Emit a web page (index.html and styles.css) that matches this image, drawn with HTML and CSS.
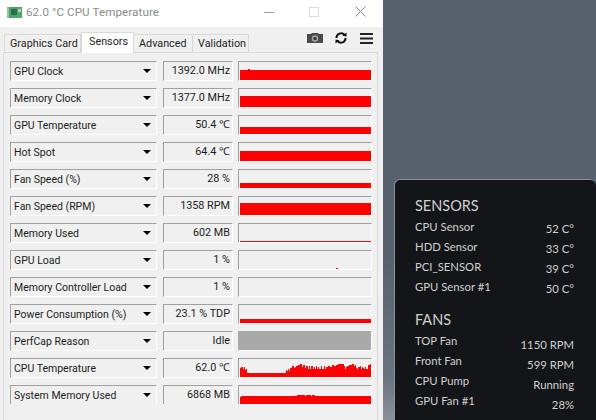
FILE: index.html
```html
<!DOCTYPE html>
<html>
<head>
    <title>CPU Temperature</title>
    <link rel="stylesheet" href="styles.css">
</head>
<body>

<div class="window">
    <div class="titlebar">
        <svg class="app-icon" width="16" height="16" viewBox="0 0 16 16">
            <rect x="1" y="3" width="14" height="11" fill="#4fa56b"/>
            <rect x="0" y="3" width="2" height="11" fill="#8fc79c"/>
            <rect x="4" y="5" width="6" height="6" fill="#2c6e46"/>
            <rect x="11" y="5" width="3" height="3" fill="#a9d6b4"/>
        </svg>
        <span class="title">62.0 °C CPU Temperature</span>
        <svg class="win-btn btn-min" width="10" height="10" viewBox="0 0 10 10"><path d="M0 5.5H10" stroke="#a0a0a0"/></svg>
        <svg class="win-btn btn-max" width="10" height="10" viewBox="0 0 10 10"><rect x="0.5" y="0.5" width="9" height="9" fill="none" stroke="#dcdcdc"/></svg>
        <svg class="win-btn btn-close" width="11" height="11" viewBox="0 0 11 11"><path d="M0.5 0.5L10.500 10.500M10.500 0.5L0.5 10.500" stroke="#8a8a8a"/></svg>
    </div>

    <div class="toolbar">
        <div class="tabs">
            <div class="tab tab-card">Graphics Card</div>
            <div class="tab active">Sensors</div>
            <div class="tab tab-adv">Advanced</div>
            <div class="tab tab-val">Validation</div>
        </div>
        <div class="tools">
            <svg width="16" height="10" viewBox="0 0 16 10">
                <path d="M0 1H4L5 0H11L12 1H16V10H0Z" fill="#4a4a4a"/>
                <circle cx="8" cy="5.500" r="3.200" fill="#a8a8a8"/>
                <circle cx="8" cy="5.500" r="1.800" fill="#3c3c3c"/>
            </svg>
            <svg width="12" height="12" viewBox="0 0 12 12">
                <path d="M1.500 6A4.500 4.500 0 0 1 9.500 3M10.500 6A4.500 4.500 0 0 1 2.500 9" fill="none" stroke="#111" stroke-width="2"/>
                <path d="M7.500 3.800L11.500 4.500V0.500Z M4.500 8.200L0.500 7.500V11.500Z" fill="#111"/>
            </svg>
            <svg width="13" height="11" viewBox="0 0 13 11">
                <path d="M0 1H13M0 5.500H13M0 10H13" stroke="#222" stroke-width="2"/>
            </svg>
        </div>
    </div>

    <div class="panel">
        <div class="row">
            <div class="combo"><span>GPU Clock</span><i class="arrow"></i></div>
            <div class="value">1392.0 MHz</div>
            <div class="graph"><i class="blip top"></i><i class="fill" style="height: 10px"></i></div>
        </div>
        <div class="row">
            <div class="combo"><span>Memory Clock</span><i class="arrow"></i></div>
            <div class="value">1377.0 MHz</div>
            <div class="graph"><i class="fill" style="height: 11px"></i></div>
        </div>
        <div class="row">
            <div class="combo"><span>GPU Temperature</span><i class="arrow"></i></div>
            <div class="value">50.4 ℃</div>
            <div class="graph"><i class="fill" style="height: 7px"></i></div>
        </div>
        <div class="row">
            <div class="combo"><span>Hot Spot</span><i class="arrow"></i></div>
            <div class="value">64.4 ℃</div>
            <div class="graph"><i class="fill" style="height: 10px"></i></div>
        </div>
        <div class="row">
            <div class="combo"><span>Fan Speed (%)</span><i class="arrow"></i></div>
            <div class="value">28 %</div>
            <div class="graph"><i class="fill" style="height: 5px"></i></div>
        </div>
        <div class="row">
            <div class="combo"><span>Fan Speed (RPM)</span><i class="arrow"></i></div>
            <div class="value">1358 RPM</div>
            <div class="graph"><i class="fill" style="height: 12px"></i></div>
        </div>
        <div class="row">
            <div class="combo"><span>Memory Used</span><i class="arrow"></i></div>
            <div class="value">602 MB</div>
            <div class="graph"><i class="fill" style="height: 1px"></i></div>
        </div>
        <div class="row">
            <div class="combo"><span>GPU Load</span><i class="arrow"></i></div>
            <div class="value">1 %</div>
            <div class="graph"><i class="blip"></i></div>
        </div>
        <div class="row">
            <div class="combo"><span>Memory Controller Load</span><i class="arrow"></i></div>
            <div class="value">1 %</div>
            <div class="graph"></div>
        </div>
        <div class="row">
            <div class="combo"><span>Power Consumption (%)</span><i class="arrow"></i></div>
            <div class="value">23.1 % TDP</div>
            <div class="graph"><i class="fill" style="height: 4px"></i></div>
        </div>
        <div class="row">
            <div class="combo"><span>PerfCap Reason</span><i class="arrow"></i></div>
            <div class="value">Idle</div>
            <div class="graph idle"></div>
        </div>
        <div class="row">
            <div class="combo"><span>CPU Temperature</span><i class="arrow"></i></div>
            <div class="value">62.0 ℃</div>
            <div class="graph">
                <svg class="plot" width="131" height="18" viewBox="0 0 131 18">
                    <path fill="#f00" d="M0 18V9H1V8H3V10H4V8H5V11H6V10H7V14H46V11H47V12H48V10H49V12H50V9H52V7H54V9H55V8H56V7H58V6H60V5H62V8H63V6H65V9H66V7H68V10H69V7H70V10H71V7H73V10H74V8H75V10H76V7H77V10H78V8H79V10H81V7H82V10H84V7H85V10H86V8H88V7H90V8H92V6H94V7H96V6H98V5H104V7H105V10H106V8H107V7H109V6H112V5H114V7H115V6H116V9H117V10H118V8H120V7H121V10H122V8H123V9H124V10H125V8H126V10H128V6H130V5H131V18Z"/>
                </svg>
            </div>
        </div>
        <div class="row">
            <div class="combo"><span>System Memory Used</span><i class="arrow"></i></div>
            <div class="value">6868 MB</div>
            <div class="graph">
                <svg class="plot" width="131" height="18" viewBox="0 0 131 18">
                    <path fill="#f00" d="M0 18V11H1V10H57V9H65V10H66V9H71V10H72V9H75V10H131V18Z"/>
                </svg>
            </div>
        </div>
    </div>
</div>

<div class="desktop">
    <div class="overlay">
        <h2>SENSORS</h2>
        <div class="stat"><span>CPU Sensor</span><span>52 C°</span></div>
        <div class="stat"><span>HDD Sensor</span><span>33 C°</span></div>
        <div class="stat"><span>PCI_SENSOR</span><span>39 C°</span></div>
        <div class="stat"><span>GPU Sensor #1</span><span>50 C°</span></div>
        <h2 class="second">FANS</h2>
        <div class="fans">
            <div class="stat"><span>TOP Fan</span><span>1150 RPM</span></div>
            <div class="stat"><span>Front Fan</span><span>599 RPM</span></div>
            <div class="stat"><span>CPU Pump</span><span>Running</span></div>
            <div class="stat"><span>GPU Fan #1</span><span>28%</span></div>
        </div>
    </div>
</div>

</body>
</html>
```

FILE: styles.css
```css
html, body {
    height: 100%;
}

body {
    margin: 0;
    display: flex;
    overflow: hidden;
    background-color: #56616d;
    font-family: "Roboto", "Liberation Sans", sans-serif;
    font-size: 10.5px;
    color: #1c1c1c;
}

/* Main window */
.window {
    width: 383px;
    height: 420px;
    flex-shrink: 0;
    background-color: #f0f0f0;
}

.titlebar {
    box-sizing: border-box;
    height: 27px;
    padding-bottom: 4px;
    display: flex;
    align-items: center;
    background-color: #fff;
}

.app-icon {
    margin-left: 7px;
}

.title {
    margin-left: 3px;
    font-size: 11.6px;
    letter-spacing: 0.1px;
    color: #8a8a8a;
    flex-grow: 1;
}

.win-btn {
    flex-shrink: 0;
}

.btn-min {
    margin-right: 35px;
}

.btn-close {
    margin-left: 36px;
    margin-right: 17px;
}

/* Tabs and toolbar */
.toolbar {
    height: 18px;
    padding: 7px 10px 0 4px;
    display: flex;
    justify-content: space-between;
}

.tabs {
    display: flex;
    align-items: flex-end;
}

.tab {
    box-sizing: border-box;
    height: 18px;
    line-height: 18px;
    font-size: 10.8px;
    padding-left: 5px;
    border: 1px solid #d9d9d9;
    border-bottom: none;
    border-left: none;
    white-space: nowrap;
}

.tab-card {
    width: 77px;
    border-left: 1px solid #d9d9d9;
}

.tab.active {
    width: 53px;
    height: 21px;
    background-color: #fff;
    padding-left: 7px;
    margin-bottom: -1px;
    line-height: 18px;
    border-left: 1px solid #d9d9d9;
    position: relative;
}

.tab-adv {
    width: 59px;
}

.tab-val {
    width: 56px;
}

.tools {
    display: flex;
    align-items: center;
    gap: 12px;
    margin-top: -7px;
    margin-bottom: 3px;
}

.tools svg:last-child {
    margin-left: 1px;
}

/* Sensor rows */
.panel {
    margin: 0 5px 0 3px;
    padding: 8px 0 0 6px;
    height: 360px;
    border: 1px solid #d9d9d9;
    border-bottom: none;
}

.row {
    height: 20px;
    margin-bottom: 7px;
    display: flex;
}

.combo,
.value,
.graph {
    box-sizing: border-box;
    height: 20px;
    border-top: 1px solid #a0a0a0;
    border-left: 1px solid #a0a0a0;
    border-right: 1px solid #fff;
    border-bottom: 1px solid #fff;
}

.row:last-child {
    height: 19px;
}

.row:last-child .combo,
.row:last-child .value,
.row:last-child .graph {
    height: 19px;
    border-bottom: none;
}

.combo {
    width: 147px;
    display: flex;
    align-items: center;
    justify-content: space-between;
    padding: 0 5px 0 3px;
    white-space: nowrap;
}

.arrow {
    width: 0;
    height: 0;
    border-left: 4px solid transparent;
    border-right: 4px solid transparent;
    border-top: 4px solid #000;
}

.value {
    width: 70px;
    margin-left: 6px;
    text-align: right;
    font-size: 10.8px;
    line-height: 18px;
    padding-right: 2px;
    white-space: nowrap;
}

.graph {
    width: 134px;
    margin-left: 5px;
    padding-left: 1px;
    display: flex;
    align-items: flex-end;
    position: relative;
}

.graph.idle {
    background-color: #a9a9a9;
    border-color: #a9a9a9 #fff #fff #a9a9a9;
}

.fill {
    width: 131px;
    background-color: #f00;
}

.plot {
    display: block;
}

.blip {
    position: absolute;
    left: 97px;
    bottom: 0;
    width: 2px;
    height: 1px;
    background-color: #f00;
}

.blip.top {
    left: 9px;
    bottom: 10px;
}

/* Overlay on the desktop */
.desktop {
    flex-grow: 1;
    display: flex;
    align-items: flex-end;
    justify-content: flex-end;
    background: linear-gradient(to bottom, #56616d 60%, #6a7480 90%, #8a929b);
}

.overlay {
    box-sizing: border-box;
    width: 202px;
    height: 241px;
    padding: 17px 22px 0 20px;
    background-color: #141518;
    border: 1px solid #8b929a;
    border-right: none;
    border-bottom: none;
    border-radius: 6px 6px 0 0;
    color: #d0d0d0;
    font-family: "Lato", "Liberation Sans", sans-serif;
    font-size: 11.3px;
}

.overlay h2 {
    margin: 0 0 3px 0;
    font-size: 14.5px;
    font-weight: normal;
    line-height: 18px;
}

.overlay h2.second {
    margin-top: 13px;
}

.stat {
    height: 20px;
    line-height: 18px;
    display: flex;
    justify-content: space-between;
}

.stat span:last-child {
    margin-top: 2px;
}

.fans .stat span:last-child {
    margin-top: 4px;
}
```
